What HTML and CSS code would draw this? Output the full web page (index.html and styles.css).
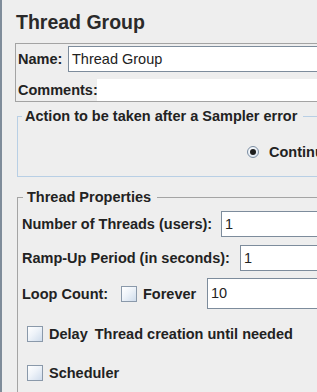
FILE: index.html
```html
<!DOCTYPE html>
<html>
<head>
<meta charset="utf-8">
<link rel="stylesheet" href="styles.css">
</head>
<body>
<div class="app">
  <div class="stripe"></div>
  <div class="main">
    <h1 class="title">Thread Group</h1>
    <div class="name-panel">
      <div class="np-row np-name">
        <span class="lbl lbl-name">Name:</span>
        <div class="field name-field">Thread Group</div>
      </div>
      <div class="np-row np-comments">
        <span class="lbl lbl-comments">Comments:</span>
        <div class="comments-area"></div>
      </div>
    </div>

    <fieldset class="group action">
      <legend class="legend legend-action">Action to be taken after a Sampler error</legend>
      <div class="radios">
        <span class="radio-opt"><span class="radio on"><span class="dot"></span></span><span class="opt-text">Continue</span></span>
        <span class="radio-opt"><span class="radio"></span><span class="opt-text">Start Next Thread Loop</span></span>
        <span class="radio-opt"><span class="radio"></span><span class="opt-text">Stop Thread</span></span>
      </div>
    </fieldset>

    <fieldset class="group props">
      <legend class="legend legend-props">Thread Properties</legend>
      <div class="props-body">
        <div class="prow prow-threads">
          <span class="lbl lbl-threads">Number of Threads (users):</span>
          <div class="field">1</div>
        </div>
        <div class="prow prow-ramp">
          <span class="lbl lbl-ramp">Ramp-Up Period (in seconds):</span>
          <div class="field">1</div>
        </div>
        <div class="prow prow-loop">
          <span class="lbl lbl-loop">Loop Count:</span>
          <span class="check"></span>
          <span class="lbl lbl-forever">Forever</span>
          <div class="field field-tall">10</div>
        </div>
        <div class="prow prow-check prow-delay">
          <span class="check"></span>
          <span class="lbl check-text">Delay<span class="wide-space"> </span>Thread creation until needed</span>
        </div>
        <div class="prow prow-check prow-sched">
          <span class="check"></span>
          <span class="lbl check-text">Scheduler</span>
        </div>
      </div>
    </fieldset>
  </div>
</div>
</body>
</html>
```
FILE: styles.css
```css
html, body {
  margin: 0;
  padding: 0;
  overflow: hidden;
  background: #eeeeee;
}

body {
  font-family: "Liberation Sans", Arial, sans-serif;
  color: #222222;
}

.app {
  display: flex;
  width: 760px;
  height: 392px;
}

.stripe {
  width: 2px;
  flex: none;
  background: #7f8c9a;
}

.main {
  flex: 1;
  padding-left: 13px;
}

.title {
  margin: 11px 0 0 0;
  padding-left: 1px;
  font-size: 19.5px;
  line-height: 23px;
  font-weight: bold;
  color: #2a2a2a;
}

.lbl {
  font-size: 14.5px;
  font-weight: bold;
  line-height: 20px;
  white-space: nowrap;
  flex: none;
}

.field {
  flex: 1;
  box-sizing: border-box;
  height: 26px;
  border: 1px solid #7d8c9c;
  background: #ffffff;
  padding-left: 3px;
  font-size: 14.5px;
  line-height: 24px;
  color: #222222;
  white-space: nowrap;
}

/* Name panel */
.name-panel {
  margin-top: 9px;
  border: 1px solid #a3a3a3;
  border-right: none;
  padding: 2px 0 0 2px;
}

.np-row {
  display: flex;
  align-items: center;
}

.np-name {
  height: 26px;
}

.lbl-name {
  width: 50px;
}

.np-comments {
  margin-top: 7px;
  height: 22px;
}

.lbl-comments {
  width: 79px;
}

.comments-area {
  flex: 1;
  height: 22px;
  background: #ffffff;
}

/* Titled groups */
.group {
  margin: 0 0 0 2px;
  padding: 0;
  min-width: 0;
  border-right: none;
}

.legend {
  font-size: 14.5px;
  font-weight: bold;
  line-height: 17px;
  white-space: nowrap;
}

.action {
  margin-top: 6px;
  border: 1px solid #b8cfe5;
  border-right: none;
}

.legend-action {
  margin-left: 4px;
  padding: 0 6px 0 3px;
}

.radios {
  display: flex;
  align-items: center;
  height: 20px;
  margin-top: 17px;
  margin-bottom: 14px;
  padding-left: 229px;
}

.radio-opt {
  display: flex;
  align-items: center;
  margin-right: 14px;
  flex: none;
}

.radio {
  box-sizing: border-box;
  width: 12px;
  height: 12px;
  border-radius: 50%;
  border: 1px solid #7c8ea3;
  background: radial-gradient(circle at 40% 35%, #ffffff 0%, #e6edf5 60%, #c9d6e6 100%);
  display: flex;
  align-items: center;
  justify-content: center;
  flex: none;
}

.dot {
  width: 6px;
  height: 6px;
  border-radius: 50%;
  background: #1e1e1e;
}

.opt-text {
  margin-left: 10px;
  font-size: 14.5px;
  font-weight: bold;
  line-height: 20px;
  white-space: nowrap;
}

.props {
  margin-top: 12px;
  border: 1px solid #a4a4a4;
  border-right: none;
  border-bottom: none;
  height: 220px;
}

.legend-props {
  margin-left: 5px;
  padding: 0 6px 0 4px;
}

.props-body {
  padding-left: 4px;
}

.prow {
  display: flex;
  align-items: center;
}

.prow-threads {
  margin-top: 5px;
  height: 26px;
}

.lbl-threads {
  width: 199px;
}

.prow-ramp {
  margin-top: 8px;
  height: 26px;
}

.lbl-ramp {
  width: 218px;
}

.prow-loop {
  margin-top: 7px;
  height: 31px;
}

.lbl-loop {
  width: 99px;
}

.lbl-forever {
  margin-left: 6px;
  width: 64px;
}

.field-tall {
  height: 31px;
  line-height: 29px;
}

.check {
  box-sizing: border-box;
  width: 16px;
  height: 16px;
  flex: none;
  border: 1px solid #8a99aa;
  background: linear-gradient(135deg, #ffffff 0%, #eef3f9 45%, #cfdcec 100%);
}

.prow-check {
  height: 20px;
  padding-left: 5px;
}

.prow-delay {
  margin-top: 15px;
}

.prow-sched {
  margin-top: 19px;
}

.check-text {
  margin-left: 6px;
}

.wide-space {
  display: inline-block;
  width: 7px;
}
```
